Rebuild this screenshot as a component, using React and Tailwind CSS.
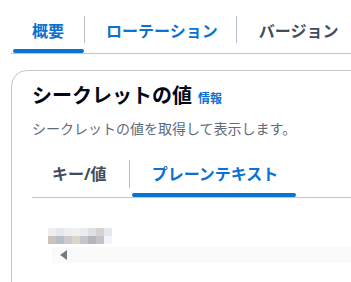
import React from 'react';

const blue = 'text-[#0972d3]';

const pixelRows = [
  ['#f0eeee', '#e6e7ea', '#eeeef0', '#f0f0f0', '#ececec', '#e0e1e4', '#d4d2d2', '#e5e7ea'],
  ['#cdc2bc', '#b5bfc9', '#cacacd', '#ddd4cb', '#c3c6cd', '#b3b7bc', '#c4c4c6', '#f0f6fc'],
];

const Tab = ({ label, active, hover, pad }) => (
  <div className={`relative flex items-center h-full ${pad}`}>
    <span
      className={`text-[16px] leading-[20px] font-bold whitespace-nowrap ${
        active || hover ? blue : 'text-[#414d5c]'
      }`}
    >
      {label}
    </span>
    {active && <div className="absolute left-0 right-0 bottom-0 h-[4px] rounded-full bg-[#0972d3]"></div>}
  </div>
);

const Sep = ({ top, h }) => <div className={`w-px bg-[#b6bec9] self-start ${top} ${h}`}></div>;

export default function App() {
  return (
    <div
      className="w-[351px] h-[282px] overflow-hidden bg-white pl-[11px]"
      style={{ fontFamily: '"Open Sans", "Noto Sans CJK JP", sans-serif' }}
    >
      {/* top tabs */}
      <div className="flex h-[46px] mt-[8px] border-b border-[#c6c6cd] pl-[2px] w-[400px]">
        <div className="flex h-[45px]">
          <Tab label="概要" active pad="pl-[19px] pr-[20px]" />
          <Sep top="mt-[8px]" h="h-[27px]" />
          <Tab label="ローテーション" hover pad="pl-[21px] pr-[18px]" />
          <Sep top="mt-[8px]" h="h-[27px]" />
          <Tab label="バージョン" pad="px-[22px]" />
        </div>
      </div>

      {/* card */}
      <div className="mt-[16px] w-[400px] h-[300px] border border-[#c6c6cd] rounded-[16px] px-[20px] pt-[13px]">
        <div className="flex items-baseline">
          <h2 className="text-[20px] leading-[24px] font-bold text-[#000716]">シークレットの値</h2>
          <span className={`ml-[6px] text-[12px] leading-[16px] font-bold ${blue}`}>情報</span>
        </div>
        <p className="mt-[11px] text-[14px] leading-[20px] text-[#5f6b7a]">
          シークレットの値を取得して表示します。
        </p>

        {/* inner tabs */}
        <div className="mt-[12px] h-[47px] border-b border-[#c6c6cd] flex">
          <div className="flex h-[46px]">
            <Tab label="キー/値" pad="pl-[20px] pr-[22px]" />
            <Sep top="mt-[9px]" h="h-[28px]" />
            <div className="ml-[2px] h-full">
              <Tab label="プレーンテキスト" active pad="pl-[20px] pr-[18px]" />
            </div>
          </div>
        </div>

        {/* blurred value */}
        <div className="mt-[30px] ml-[16px] flex flex-col">
          {pixelRows.map((row, i) => (
            <div key={i} className="flex">
              {row.map((c, j) => (
                <div key={j} className="w-[8px] h-[8px]" style={{ backgroundColor: c }}></div>
              ))}
            </div>
          ))}
        </div>

        {/* horizontal scrollbar */}
        <div className="mt-[3px] ml-[20px] h-[16px] bg-[#fafafa] flex items-center pl-[8px]">
          <div className="w-0 h-0 border-y-[5px] border-y-transparent border-r-[7px] border-r-[#7a7a7a]"></div>
        </div>
      </div>
    </div>
  );
}
